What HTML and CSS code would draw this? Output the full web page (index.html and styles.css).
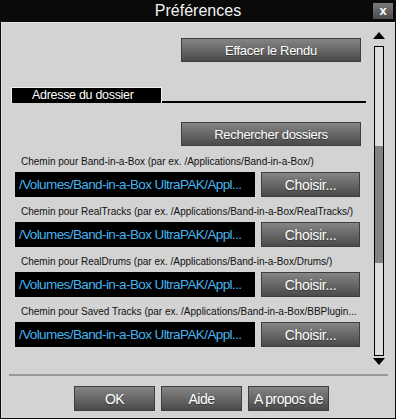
FILE: index.html
```html
<!DOCTYPE html>
<html lang="fr">
<head>
    <meta charset="UTF-8">
    <meta name="viewport" content="width=device-width, initial-scale=1.0">
    <title>Préférences</title>
    <link rel="stylesheet" href="styles.css">
</head>
<body>
    <div class="window">
        <div class="titlebar">
            <span></span>
            <span class="title">Préférences</span>
            <button class="close">x</button>
        </div>
        <div class="panel">
            <div class="scroll-area">
                <div class="main">
                    <div class="right-row">
                        <button class="btn wide">Effacer le Rendu</button>
                    </div>
                    <div class="tab-row">
                        <div class="tab">Adresse du dossier</div>
                        <div class="tab-line"></div>
                    </div>
                    <div class="right-row">
                        <button class="btn wide">Rechercher dossiers</button>
                    </div>

                    <div class="path">
                        <div class="label">Chemin pour Band-in-a-Box (par ex. /Applications/Band-in-a-Box/)</div>
                        <div class="path-row">
                            <div class="field">/Volumes/Band-in-a-Box UltraPAK/Appl...</div>
                            <button class="btn choose">Choisir...</button>
                        </div>
                    </div>
                    <div class="path">
                        <div class="label">Chemin pour RealTracks (par ex. /Applications/Band-in-a-Box/RealTracks/)</div>
                        <div class="path-row">
                            <div class="field">/Volumes/Band-in-a-Box UltraPAK/Appl...</div>
                            <button class="btn choose">Choisir...</button>
                        </div>
                    </div>
                    <div class="path">
                        <div class="label">Chemin pour RealDrums (par ex. /Applications/Band-in-a-Box/Drums/)</div>
                        <div class="path-row">
                            <div class="field">/Volumes/Band-in-a-Box UltraPAK/Appl...</div>
                            <button class="btn choose">Choisir...</button>
                        </div>
                    </div>
                    <div class="path">
                        <div class="label">Chemin pour Saved Tracks (par ex. /Applications/Band-in-a-Box/BBPlugin...</div>
                        <div class="path-row">
                            <div class="field">/Volumes/Band-in-a-Box UltraPAK/Appl...</div>
                            <button class="btn choose">Choisir...</button>
                        </div>
                    </div>
                </div>
                <div class="scrollbar">
                    <div class="arrow up"></div>
                    <div class="track">
                        <div class="track-before"></div>
                        <div class="thumb"></div>
                    </div>
                    <div class="arrow down"></div>
                </div>
            </div>
            <div class="separator"></div>
            <div class="footer">
                <button class="btn foot">OK</button>
                <button class="btn foot">Aide</button>
                <button class="btn foot">A propos de</button>
            </div>
        </div>
    </div>
</body>
</html>
```

FILE: styles.css
```css
body {
    margin: 0;
    background: #000;
    font-family: "Liberation Sans", Arial, sans-serif;
}
.window {
    width: 396px;
    height: 419px;
    background: #0a0a0a;
    display: flex;
    flex-direction: column;
}
.titlebar {
    height: 22px;
    display: grid;
    grid-template-columns: 1fr auto 1fr;
    align-items: center;
}
.title {
    color: #f2f2f2;
    font-size: 16px;
    line-height: 22px;
}
.close {
    justify-self: end;
    margin-right: 3px;
    width: 20px;
    height: 16px;
    padding: 0;
    border: none;
    background: linear-gradient(#7a7a7a, #4c4c4c);
    color: #fff;
    font-family: "Liberation Sans", Arial, sans-serif;
    font-weight: bold;
    font-size: 13px;
    line-height: 14px;
}
.panel {
    flex: 1;
    margin: 0 1px 1px 1px;
    background: #d3d3d3;
    border-top: 1px solid #e4e4e4;
    border-left: 1px solid #e4e4e4;
    display: flex;
    flex-direction: column;
}
.scroll-area {
    height: 351px;
    display: flex;
}
.main {
    flex: 1;
    padding-top: 15px;
}
.right-row {
    display: flex;
    justify-content: flex-end;
    padding-right: 8px;
}
.btn {
    border: 1px solid #3e3e3e;
    background: linear-gradient(#858585, #4a4a4a);
    color: #fff;
    font-family: "Liberation Sans", Arial, sans-serif;
    font-size: 13px;
    letter-spacing: -0.3px;
    text-shadow: 0 1px 1px rgba(0, 0, 0, 0.4);
    padding: 0;
}
.wide {
    width: 180px;
    height: 24px;
}
.tab-row {
    display: flex;
    align-items: flex-end;
    margin: 25px 3px 0 9px;
}
.tab {
    height: 15px;
    background: #000;
    border: 1px solid #f0f0f0;
    border-bottom: none;
    color: #fff;
    font-size: 12.5px;
    letter-spacing: -0.3px;
    line-height: 15px;
    padding-left: 20px;
    width: 129px;
}
.tab-line {
    flex: 1;
    height: 2px;
    background: #000;
}
.tab-row + .right-row {
    margin-top: 19px;
}
.path {
    padding-left: 13px;
    margin-top: 9px;
}
.right-row + .path {
    margin-top: 10px;
}
.label {
    font-size: 10px;
    line-height: 12px;
    color: #111;
    padding-left: 6px;
    white-space: nowrap;
}
.path-row {
    display: flex;
    gap: 6px;
    margin-top: 4px;
}
.field {
    width: 236px;
    height: 25px;
    background: #000;
    color: #45b4ee;
    font-size: 13.5px;
    letter-spacing: -0.6px;
    line-height: 25px;
    padding-left: 4px;
    white-space: nowrap;
    overflow: hidden;
}
.choose {
    width: 99px;
    height: 25px;
    font-size: 14px;
}
.scrollbar {
    width: 20px;
    margin-right: 6px;
    display: flex;
    flex-direction: column;
    align-items: center;
    padding-top: 9px;
}
.arrow {
    width: 0;
    height: 0;
    border-left: 6px solid transparent;
    border-right: 6px solid transparent;
}
.up {
    border-bottom: 7px solid #000;
}
.down {
    margin-top: 2px;
    border-top: 7px solid #000;
}
.track {
    margin-top: 7px;
    width: 8px;
    height: 308px;
    border: 1px solid #000;
    background: #dedede;
    display: flex;
    flex-direction: column;
}
.track-before {
    height: 99px;
}
.thumb {
    height: 117px;
    background: #838383;
}
.separator {
    height: 2px;
    margin: 0 7px 0 7px;
    background: #9a9a9a;
}
.footer {
    display: flex;
    justify-content: center;
    gap: 6px;
    padding-top: 10px;
    padding-left: 6px;
}
.foot {
    width: 81px;
    height: 25px;
    font-size: 14px;
    letter-spacing: -0.5px;
}
```
